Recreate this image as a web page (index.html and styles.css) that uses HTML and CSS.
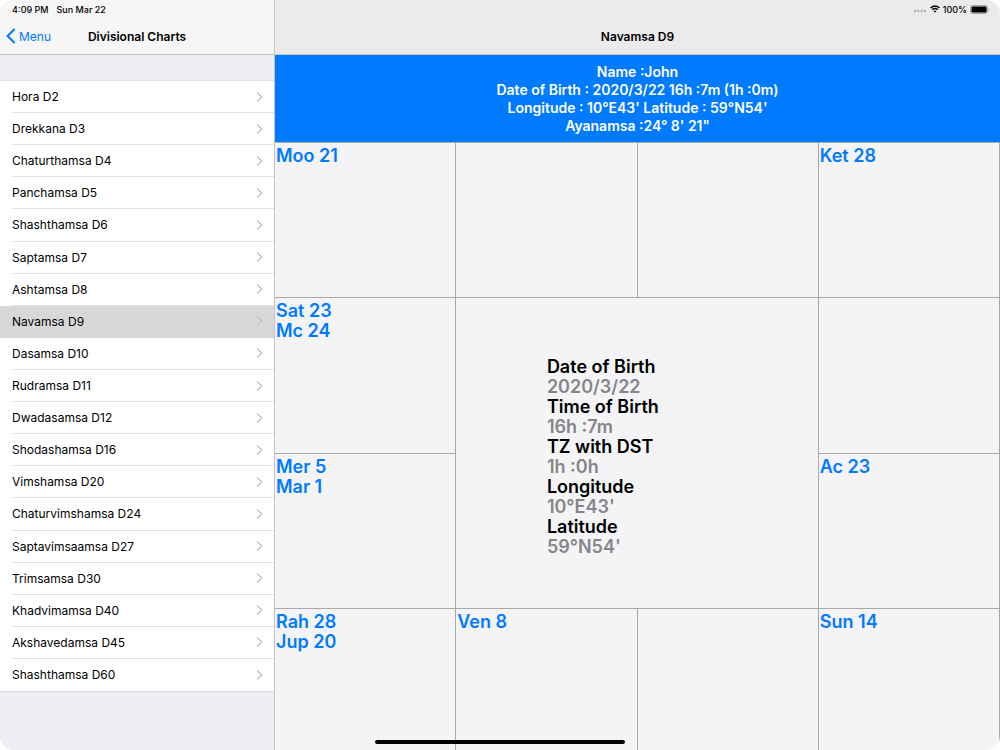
FILE: index.html
```html
<!DOCTYPE html>
<html lang="en">
<head>
  <meta charset="UTF-8" />
  <meta name="viewport" content="width=device-width, initial-scale=1.0"/>
  <title>Navamsa D9</title>
  <link rel="stylesheet" href="styles.css">
</head>
<body>

  <svg class="sprite" width="0" height="0">
    <symbol id="chevron" viewBox="0 0 7 12">
      <path d="M1 1.5L5.8 6L1 10.5" fill="none" stroke="currentColor" stroke-width="1.4"/>
    </symbol>
  </svg>

  <div class="app">
    <aside class="sidebar">
      <header class="bar">
        <div class="status">
          <span>4:09 PM</span>
          <span>Sun Mar 22</span>
        </div>
        <div class="nav">
          <a class="back" href="#">
            <svg width="10" height="16" viewBox="0 0 10 16"><path d="M8.6 1L1.6 8L8.6 15" fill="none" stroke="currentColor" stroke-width="2"/></svg>
            Menu
          </a>
          <h2>Divisional Charts</h2>
        </div>
      </header>

      <nav class="list">
        <a href="#">Hora D2<svg><use href="#chevron"/></svg></a>
        <a href="#">Drekkana D3<svg><use href="#chevron"/></svg></a>
        <a href="#">Chaturthamsa D4<svg><use href="#chevron"/></svg></a>
        <a href="#">Panchamsa D5<svg><use href="#chevron"/></svg></a>
        <a href="#">Shashthamsa D6<svg><use href="#chevron"/></svg></a>
        <a href="#">Saptamsa D7<svg><use href="#chevron"/></svg></a>
        <a href="#">Ashtamsa D8<svg><use href="#chevron"/></svg></a>
        <a href="#" class="selected">Navamsa D9<svg><use href="#chevron"/></svg></a>
        <a href="#">Dasamsa D10<svg><use href="#chevron"/></svg></a>
        <a href="#">Rudramsa D11<svg><use href="#chevron"/></svg></a>
        <a href="#">Dwadasamsa D12<svg><use href="#chevron"/></svg></a>
        <a href="#">Shodashamsa D16<svg><use href="#chevron"/></svg></a>
        <a href="#">Vimshamsa D20<svg><use href="#chevron"/></svg></a>
        <a href="#">Chaturvimshamsa D24<svg><use href="#chevron"/></svg></a>
        <a href="#">Saptavimsaamsa D27<svg><use href="#chevron"/></svg></a>
        <a href="#">Trimsamsa D30<svg><use href="#chevron"/></svg></a>
        <a href="#">Khadvimamsa D40<svg><use href="#chevron"/></svg></a>
        <a href="#">Akshavedamsa D45<svg><use href="#chevron"/></svg></a>
        <a href="#">Shashthamsa D60<svg><use href="#chevron"/></svg></a>
      </nav>
    </aside>

    <main class="detail">
      <header class="bar">
        <div class="status right">
          <svg width="14" height="10" viewBox="0 0 14 10" fill="#b4b4b6">
            <circle cx="2" cy="7" r="1.3"/>
            <circle cx="5.3" cy="7" r="1.3"/>
            <circle cx="8.6" cy="7" r="1.3"/>
            <circle cx="11.9" cy="7" r="1.3"/>
          </svg>
          <svg width="10" height="8" viewBox="0 0 10 8" fill="none" stroke="#000" stroke-width="1.4">
            <path d="M0.5 2.9Q5 -1.1 9.5 2.9"/>
            <path d="M2.2 4.8Q5 2.4 7.8 4.8"/>
            <path d="M3.5 6L5 7.7L6.5 6Q5 4.9 3.5 6Z" fill="#000" stroke="none"/>
          </svg>
          <span>100%</span>
          <svg width="20" height="9" viewBox="0 0 20 9">
            <rect x="0.5" y="0.5" width="17" height="8" rx="2.4" fill="#dcdcdc" stroke="#a0a0a0"/>
            <rect x="1.5" y="1.5" width="15" height="6" rx="1.2"/>
            <path d="M18.6 3.1Q20.4 4.5 18.6 5.9Z" fill="#a0a0a0"/>
          </svg>
        </div>
        <div class="nav">
          <h1>Navamsa D9</h1>
        </div>
      </header>

      <section class="info">
        <div>Name :John</div>
        <div>Date of Birth : 2020/3/22 16h :7m (1h :0m)</div>
        <div>Longitude : 10°E43' Latitude : 59°N54'</div>
        <div>Ayanamsa :24° 8' 21"</div>
      </section>

      <section class="chart">
        <div class="house">Moo 21</div>
        <div class="house"></div>
        <div class="house"></div>
        <div class="house">Ket 28</div>

        <div class="house">Sat 23<br>Mc 24</div>
        <dl class="center">
          <dt>Date of Birth</dt>
          <dd>2020/3/22</dd>
          <dt>Time of Birth</dt>
          <dd>16h :7m</dd>
          <dt>TZ with DST</dt>
          <dd>1h :0h</dd>
          <dt>Longitude</dt>
          <dd>10°E43'</dd>
          <dt>Latitude</dt>
          <dd>59°N54'</dd>
        </dl>
        <div class="house"></div>

        <div class="house">Mer 5<br>Mar 1</div>
        <div class="house">Ac 23</div>

        <div class="house">Rah 28<br>Jup 20</div>
        <div class="house">Ven 8</div>
        <div class="house"></div>
        <div class="house">Sun 14</div>
      </section>
    </main>

    <div class="home-indicator"></div>
  </div>

</body>
</html>
```
FILE: styles.css
```css
:root {
  --blue: #007aff;
  --line: #a9a9ab;
  --group: #efeef4;
  --panel: #f4f4f7;
}

* {
  box-sizing: border-box;
}

body {
  margin: 0;
  font-family: Inter, "Liberation Sans", sans-serif;
  background: #fff;
  color: #000;
}

.sprite {
  position: absolute;
}

.app {
  position: relative;
  display: flex;
  min-height: 100vh;
  border-radius: 14px;
  overflow: hidden;
}

.sidebar {
  width: 27.5%;
  display: flex;
  flex-direction: column;
  background: var(--group);
  border-right: 1px solid #c4c4c7;
}

.detail {
  flex: 1;
  display: flex;
  flex-direction: column;
  background: var(--panel);
}

/* status + navigation bar */
.bar {
  background: #f6f6f7;
  border-bottom: 1px solid #c4c4c7;
}

.detail .bar {
  background: #ebebec;
}

.status {
  display: flex;
  align-items: center;
  gap: 8px;
  height: 18px;
  padding: 0 12px;
  font-size: 9px;
  font-weight: 500;
}

.status.right {
  justify-content: flex-end;
  gap: 3px;
  padding: 0 10px;
}

.nav {
  display: grid;
  grid-template-columns: 1fr auto 1fr;
  align-items: center;
  height: 36px;
  padding: 0 6px;
}

.nav h1,
.nav h2 {
  grid-column: 2;
  margin: 0;
  font-size: 12px;
  font-weight: 600;
}

.back {
  display: flex;
  align-items: center;
  gap: 3px;
  color: var(--blue);
  font-size: 12px;
  text-decoration: none;
}

/* chart list */
.list {
  flex: 1;
  display: flex;
  flex-direction: column;
  margin: 25px 0 58px;
  background: #fff;
  border-top: 1px solid #e2e2e5;
  border-bottom: 1px solid #dcdcdf;
}

.list a {
  flex: 1;
  display: flex;
  align-items: center;
  justify-content: space-between;
  min-height: 32px;
  padding: 0 11px 1px 12px;
  background: linear-gradient(#e2e2e5, #e2e2e5) 12px 100% / 100% 1px no-repeat;
  color: #000;
  font-size: 12px;
  text-decoration: none;
}

.list a:last-child {
  background: none;
}

.list a.selected {
  background: #d8d8d8;
}

.list svg {
  width: 7px;
  height: 12px;
  color: #c3c3c8;
}

/* birth data banner */
.info {
  padding: 8px 0 7px;
  background: var(--blue);
  color: #fff;
  font-size: 14px;
  font-weight: 600;
  line-height: 18px;
  text-align: center;
}

/* south indian chart */
.chart {
  flex: 1;
  display: grid;
  grid-template-columns: repeat(4, 1fr);
  grid-template-rows: 11fr 11fr 11fr 10fr;
  border-top: 1px solid var(--line);
}

.house,
.center {
  border-right: 1px solid var(--line);
  border-bottom: 1px solid var(--line);
  font-size: 18px;
  font-weight: 600;
  line-height: 20px;
}

.house {
  padding: 3px 1px;
  color: var(--blue);
}

.house:nth-last-child(-n+4) {
  border-bottom: none;
}

.center {
  grid-column: 2 / 4;
  grid-row: 2 / 4;
  display: flex;
  flex-direction: column;
  justify-content: center;
  margin: 0;
  padding: 7px 0 0 25%;
}

.center dd {
  margin: 0;
  color: #868688;
}

.home-indicator {
  position: absolute;
  left: 50%;
  bottom: 6px;
  width: 25%;
  height: 4px;
  border-radius: 2px;
  background: #000;
  transform: translateX(-50%);
}
```
